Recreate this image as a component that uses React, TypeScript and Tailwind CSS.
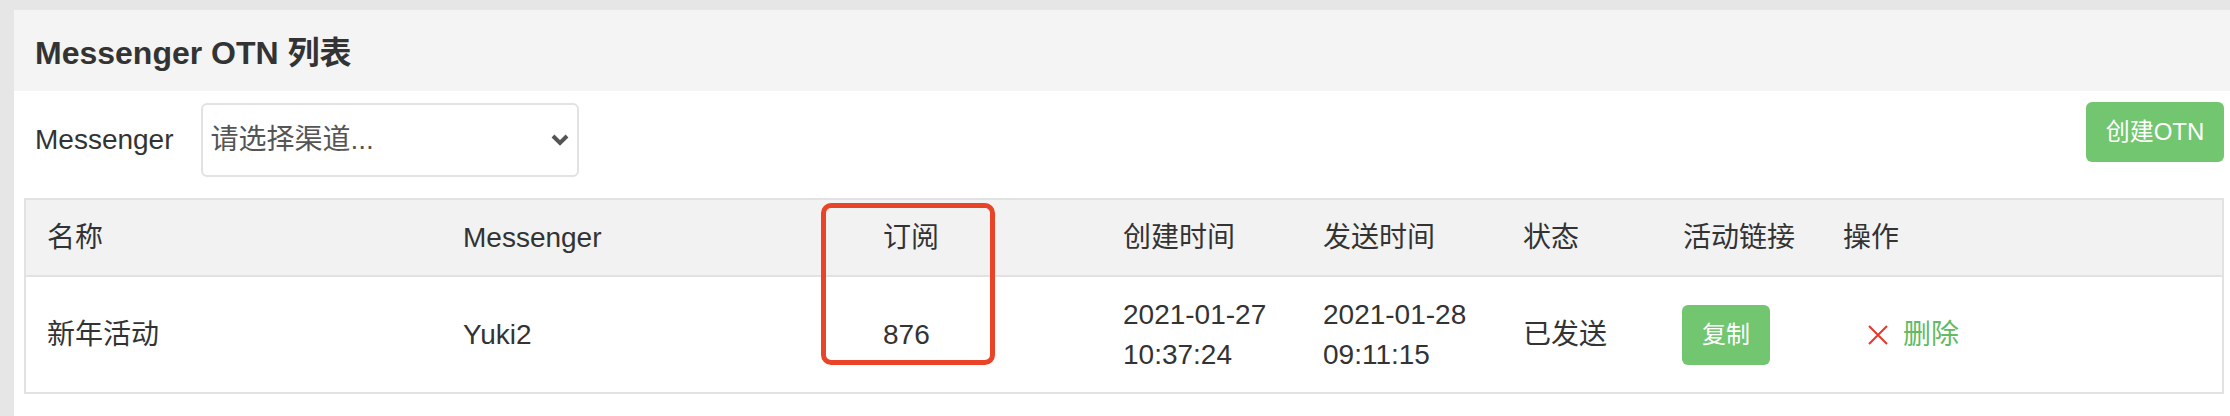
import React from "react";

const cols = "grid grid-cols-[416px_420px_240px_200px_200px_160px_160px_400px]";

function Chevron() {
  return (
    <svg width="18" height="12" viewBox="0 0 18 12" className="shrink-0">
      <polyline points="2,2 9,9 16,2" fill="none" stroke="#555" strokeWidth="4" strokeLinejoin="miter" />
    </svg>
  );
}

function CrossIcon() {
  return (
    <svg width="20" height="20" viewBox="0 0 20 20" className="shrink-0">
      <path d="M1 1 L19 19 M19 1 L1 19" stroke="#e8362a" strokeWidth="2" fill="none" />
    </svg>
  );
}

export default function App() {
  const headers = ["名称", "Messenger", "订阅", "创建时间", "发送时间", "状态", "活动链接", "操作"];

  return (
    <div
      className="relative w-[2230px] h-[416px] overflow-hidden bg-[#e6e6e6] pt-[10px] pl-[14px] text-[#333]"
      style={{ fontFamily: '"Liberation Sans", "Noto Sans CJK SC", sans-serif' }}
    >
      <div className="h-full bg-white">
        <div className="flex h-[81px] items-center bg-[#f4f4f4] pl-[21px] pt-[4px] text-[32px] font-semibold">
          Messenger OTN 列表
        </div>

        <div className="flex items-start justify-between pl-[21px] pr-[6px] pt-[11px]">
          <div className="flex items-center gap-[27px] pt-[1px]">
            <span className="text-[28px]">Messenger</span>
            <div className="flex h-[74px] w-[378px] items-center justify-between rounded-[6px] border-2 border-[#e2e2e2] pl-[8px] pr-[8px] text-[28px] text-[#555]">
              <span>请选择渠道...</span>
              <Chevron />
            </div>
          </div>
          <button className="h-[60px] w-[138px] rounded-[6px] bg-[#72c66f] text-[24px] text-white">创建OTN</button>
        </div>

        <div className="ml-[10px] mt-[21px] w-[2200px] border-2 border-[#e2e2e2]">
          <div className={`${cols} h-[77px] items-center border-b-2 border-[#e2e2e2] bg-[#f2f2f2] text-[28px]`}>
            {headers.map((h) => (
              <div key={h} className="pl-[21px]">
                {h}
              </div>
            ))}
          </div>
          <div className={`${cols} h-[115px] items-center text-[28px]`}>
            <div className="pl-[21px]">新年活动</div>
            <div className="pl-[21px]">Yuki2</div>
            <div className="pl-[21px]">876</div>
            <div className="pl-[21px] leading-[40px]">
              2021-01-27
              <br />
              10:37:24
            </div>
            <div className="pl-[21px] leading-[40px]">
              2021-01-28
              <br />
              09:11:15
            </div>
            <div className="pl-[21px]">已发送</div>
            <div className="pl-[20px]">
              <button className="h-[60px] w-[88px] rounded-[6px] bg-[#72c66f] text-[24px] text-white">复制</button>
            </div>
            <div className="flex items-center gap-[15px] pl-[46px] text-[#62bb62]">
              <CrossIcon />
              <span>删除</span>
            </div>
          </div>
        </div>
      </div>

      <div className="pointer-events-none absolute left-[821px] top-[203px] h-[162px] w-[174px] rounded-[10px] border-[5px] border-[#ea4428]" />
    </div>
  );
}
